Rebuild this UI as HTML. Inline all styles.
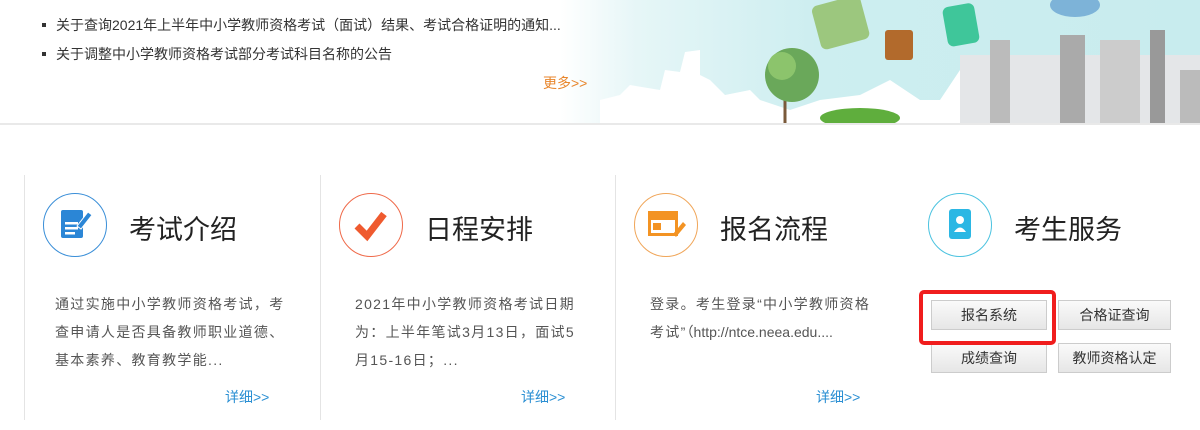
<!DOCTYPE html>
<html><head><meta charset="utf-8"><style>
*{margin:0;padding:0;box-sizing:border-box}
body{width:1200px;height:430px;overflow:hidden;background:#fff;position:relative;font-family:"Liberation Sans","Noto Sans CJK SC",sans-serif;color:#333}
.a{position:absolute}
.news{font-size:14px;color:#333;left:40px}
.news::before{content:"";position:absolute;left:2px;top:8px;width:4px;height:4px;background:#333}
.news span{padding-left:16px}
.card{position:absolute;top:175px;height:245px;width:296px;border-left:1px solid #e4e4e4}
.circ{position:absolute;top:18px;left:18px;width:64px;height:64px;border-radius:50%;border:1px solid}
.title{position:absolute;top:33px;left:104px;font-size:27px;color:#222}
.desc{position:absolute;top:115px;left:30px;width:238px;font-size:14px;line-height:28px;color:#555;letter-spacing:1.3px}
.more{position:absolute;top:212px;left:200px;font-size:14px;color:#2a8fd3}
.btn{position:absolute;width:116px;height:30px;background:linear-gradient(#fafafa,#e6e6e6);border:1px solid #ccc;font-size:14px;text-align:center;line-height:28px;color:#333}
</style></head><body>
<div class="a" style="left:560px;top:0;width:640px;height:123px;background:linear-gradient(90deg,#fff 0%,#e6f6f7 12%,#cdeef0 40%,#c8ecee 100%)"></div>
<svg class="a" style="left:560px;top:0" width="640" height="123">
<path d="M40 123 L40 100 L60 95 L70 85 L100 90 L105 70 L120 72 L125 52 L140 50 L140 75 L150 80 L165 95 L190 90 L200 100 L230 110 L260 100 L300 95 L330 80 L360 100 L380 100 L400 70 L420 80 L420 123Z" fill="#fff"/>
<path d="M225 93 L225 123" stroke="#7a5a3a" stroke-width="3"/>
<circle cx="232" cy="75" r="27" fill="#6aa85a"/><circle cx="222" cy="66" r="14" fill="#8cc46c"/>
<ellipse cx="300" cy="118" rx="40" ry="10" fill="#5fae3d"/>
<rect x="400" y="55" width="240" height="68" fill="#e4e6e8"/>
<rect x="430" y="40" width="20" height="83" fill="#bbb"/><rect x="500" y="35" width="25" height="88" fill="#aaa"/>
<rect x="540" y="40" width="40" height="83" fill="#ccc"/><rect x="590" y="30" width="15" height="93" fill="#999"/><rect x="620" y="70" width="20" height="53" fill="#bbb"/>
<rect x="255" y="0" width="50" height="45" rx="6" fill="#9cc77e" transform="rotate(-15 280 20)"/>
<rect x="325" y="30" width="28" height="30" rx="3" fill="#b26a2c"/>
<rect x="385" y="5" width="32" height="40" rx="6" fill="#3fc69a" transform="rotate(-10 400 25)"/>
<ellipse cx="515" cy="5" rx="25" ry="12" fill="#7db3d8"/>
</svg>
<div class="a" style="left:0;top:123px;width:1200px;height:2px;background:#e9e9e9"></div>
<div class="a news" style="top:15px"><span>关于查询2021年上半年中小学教师资格考试（面试）结果、考试合格证明的通知...</span></div>
<div class="a news" style="top:44px"><span>关于调整中小学教师资格考试部分考试科目名称的公告</span></div>
<div class="a" style="left:543px;top:73px;font-size:14px;color:#e8862c">更多&gt;&gt;</div>

<div class="card" style="left:24px">
<div class="circ" style="border-color:#3b8fd8"><svg width="62" height="62"><rect x="17" y="16" width="22" height="28" rx="2" fill="#2b86d6"/><rect x="21" y="28" width="13" height="2.5" fill="#fff"/><rect x="21" y="33" width="13" height="2.5" fill="#fff"/><rect x="21" y="38" width="10" height="2.5" fill="#fff"/><path d="M33 32 L44 18 L48 21 L37 35Z" fill="#2b86d6" stroke="#fff"/></svg></div>
<div class="title">考试介绍</div>
<div class="desc">通过实施中小学教师资格考试，考查申请人是否具备教师职业道德、基本素养、教育教学能...</div>
<div class="more">详细&gt;&gt;</div></div>

<div class="card" style="left:320px">
<div class="circ" style="border-color:#ef6a4a"><svg width="62" height="62"><path d="M17 32 L27 42 L44 20" stroke="#ef5a2f" stroke-width="7" fill="none"/></svg></div>
<div class="title">日程安排</div>
<div class="desc" style="left:34px;width:220px">2021年中小学教师资格考试日期为：上半年笔试3月13日，面试5月15-16日；...</div>
<div class="more">详细&gt;&gt;</div></div>

<div class="card" style="left:615px">
<div class="circ" style="border-color:#f0a65a"><svg width="62" height="62"><rect x="13" y="17" width="30" height="25" fill="#f39323"/><rect x="16" y="26" width="24" height="13" fill="#fff"/><rect x="18" y="29" width="8" height="7" fill="#f39323"/><path d="M38 40 L48 28 L51 31 L41 43Z" fill="#f39323"/></svg></div>
<div class="title">报名流程</div>
<div class="desc" style="left:34px;width:226px">登录。考生登录“中小学教师资格考试”<span style="letter-spacing:0">（http://ntce.neea.edu....</span></div>
<div class="more">详细&gt;&gt;</div></div>

<div class="card" style="left:910px;border-left:none">
<div class="circ" style="border-color:#4cc3e0"><svg width="62" height="62"><rect x="20" y="15" width="22" height="30" rx="3" fill="#2bb7e4"/><circle cx="31" cy="26" r="4" fill="#fff"/><path d="M25 38 Q31 29 37 38Z" fill="#fff"/></svg></div>
<div class="title">考生服务</div>
</div>
<div class="btn" style="left:931px;top:300px">报名系统</div>
<div class="btn" style="left:1058px;top:300px;width:113px">合格证查询</div>
<div class="btn" style="left:931px;top:343px">成绩查询</div>
<div class="btn" style="left:1058px;top:343px;width:113px">教师资格认定</div>
<div class="a" style="left:919px;top:290px;width:137px;height:55px;border:4px solid #f01d1d;border-radius:5px"></div>
</body></html>
